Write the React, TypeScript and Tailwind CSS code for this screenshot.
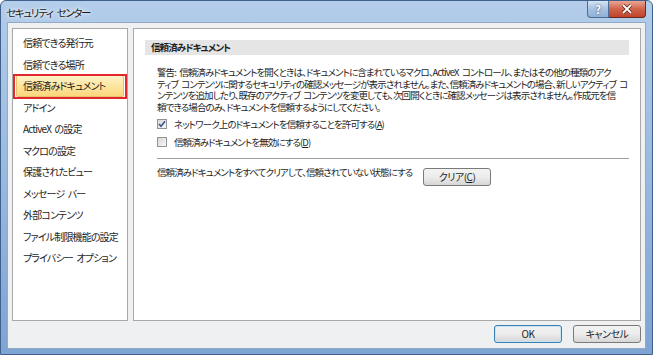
import React from "react";

const jp = "font-['Noto_Sans_CJK_JP',sans-serif] [font-feature-settings:'palt']";

const navItems = [
  "信頼できる発行元",
  "信頼できる場所",
  "信頼済みドキュメント",
  "アドイン",
  "ActiveX の設定",
  "マクロの設定",
  "保護されたビュー",
  "メッセージ バー",
  "外部コンテンツ",
  "ファイル制限機能の設定",
  "プライバシー オプション",
];

const Check: React.FC<{ checked?: boolean; children: React.ReactNode }> = ({ checked, children }) => (
  <div className="flex items-center h-[18px]">
    <span className="w-[10px] h-[10px] border border-[#939393] bg-gradient-to-br from-[#d8d8d8] to-[#f8f8f8] flex items-center justify-center">
      {checked && (
        <svg width="8" height="8" viewBox="0 0 8 8">
          <path d="M1 4 L3 6.2 L7 1.2" fill="none" stroke="#3d5690" strokeWidth="1.6" />
        </svg>
      )}
    </span>
    <span className="ml-[7px] leading-[12px] whitespace-nowrap">{children}</span>
  </div>
);

const WinButton: React.FC<{ children: React.ReactNode; primary?: boolean; className?: string }> = ({
  children,
  primary,
  className = "",
}) => (
  <button
    className={`w-[68px] h-[18px] shrink-0 rounded-[3px] border text-[10px] tracking-[-0.5px] leading-none text-[#1e1e1e] flex items-center justify-center bg-gradient-to-b from-[#f3f3f3] via-[#ececec] to-[#d6d6d6] ${
      primary ? "border-[#3c7fb1] shadow-[inset_0_0_0_1px_#c6e4f7]" : "border-[#7a7a7a]"
    } ${className}`}
  >
    {children}
  </button>
);

export default function App() {
  return (
    <div className={`w-[653px] h-[355px] flex flex-col bg-gradient-to-b from-[#b3cdea] to-[#7ea4d4] border border-[#3f618c] rounded-t-[6px] overflow-hidden text-[#1e1e1e] ${jp}`}>
      {/* title bar */}
      <div className="h-[21px] flex items-start shrink-0">
        <div className="pl-[5px] pt-[5px] text-[10.5px] tracking-[-1.3px] [word-spacing:3px] leading-[13px] text-[#1a1a1a] [text-shadow:0_0_6px_#ffffff,0_0_3px_#ffffff]">
          セキュリティ センター
        </div>
        <div className="ml-auto mr-[6px] flex h-[17px]">
          <div className="w-[22px] h-full border border-[#4d6c94] border-t-0 rounded-bl-[4px] bg-gradient-to-b from-[#d6e4f4] via-[#a6c1e0] to-[#8fb0d8] flex items-center justify-center text-white text-[11px] font-bold [text-shadow:0_0_2px_#2b4466]">
            ?
          </div>
          <div className="w-[37px] h-full border border-[#6c2a1f] border-t-0 border-l-0 rounded-br-[4px] bg-gradient-to-b from-[#e9a593] via-[#d0634b] to-[#c0442c] flex items-center justify-center">
            <svg width="12" height="10" viewBox="0 0 12 10">
              <path d="M2 1 L10 9 M10 1 L2 9" stroke="#5a1c12" strokeWidth="3.2" />
              <path d="M2 1 L10 9 M10 1 L2 9" stroke="#ffffff" strokeWidth="1.8" />
            </svg>
          </div>
        </div>
      </div>

      {/* client area */}
      <div className="flex-1 mx-[6px] mb-[5px] bg-[#eff0f2] border border-[#93a9c6] px-[4px] pt-[5px] flex flex-col text-[10px] tracking-[-0.85px] [word-spacing:2px]">
        <div className="flex gap-[5px] h-[293px]">
          {/* left nav */}
          <div className="w-[116px] shrink-0 bg-white border border-[#a8a8a8] pt-[3px]">
            {navItems.map((item, i) =>
              i === 2 ? (
                <div key={item} className="relative h-[21.5px] mx-[3px] rounded-[2px] border border-[#e2c26a] bg-gradient-to-b from-[#fef3c7] via-[#fde5a0] to-[#fbd67c] flex items-center pl-[6px] whitespace-nowrap">
                  {item}
                  <div className="absolute -left-[4px] -right-[4px] -top-[2px] -bottom-[3px] border-2 border-[#e3262b]" />
                </div>
              ) : (
                <div key={item} className="h-[21.5px] flex items-center pl-[10px] whitespace-nowrap">
                  {item}
                </div>
              )
            )}
          </div>

          {/* right content */}
          <div className="flex-1 min-w-0 overflow-hidden bg-white border border-[#a8a8a8] px-[11px] pt-[11px] text-[9.5px] tracking-[-0.9px]">
            <div className="h-[15px] bg-[#e5e5e5] flex items-center pl-[6px] font-bold">
              信頼済みドキュメント
            </div>
            <div className="pl-[12px]">
              <div className="mt-[12px] leading-[11.67px] whitespace-nowrap">
                <div>警告: 信頼済みドキュメントを開くときは、ドキュメントに含まれているマクロ、ActiveX コントロール、またはその他の種類のアク</div>
                <div>ティブ コンテンツに関するセキュリティの確認メッセージが表示されません。また、信頼済みドキュメントの場合、新しいアクティブ コ</div>
                <div>ンテンツを追加したり、既存のアクティブ コンテンツを変更しても、次回開くときに確認メッセージは表示されません。作成元を信</div>
                <div>頼できる場合のみ、ドキュメントを信頼するようにしてください。</div>
              </div>
              <div className="mt-[1.5px]">
                <Check checked>
                  ネットワーク上のドキュメントを信頼することを許可する(<span className="underline">A</span>)
                </Check>
                <Check>
                  信頼済みドキュメントを無効にする(<span className="underline">D</span>)
                </Check>
              </div>
              <div className="mt-[7px] border-t border-[#a0a0a0]" />
              <div className="mt-[8px] flex items-start">
                <div className="w-[266px] shrink-0 whitespace-nowrap leading-[12px] -mt-[1px]">
                  信頼済みドキュメントをすべてクリアして、信頼されていない状態にする
                </div>
                <WinButton className="mt-[1px] h-[17px]">
                  クリア(<span className="underline">C</span>)
                </WinButton>
              </div>
            </div>
          </div>
        </div>

        {/* bottom buttons */}
        <div className="mt-[4px] flex justify-end gap-[11px]">
          <WinButton primary>OK</WinButton>
          <WinButton>キャンセル</WinButton>
        </div>
      </div>
    </div>
  );
}
